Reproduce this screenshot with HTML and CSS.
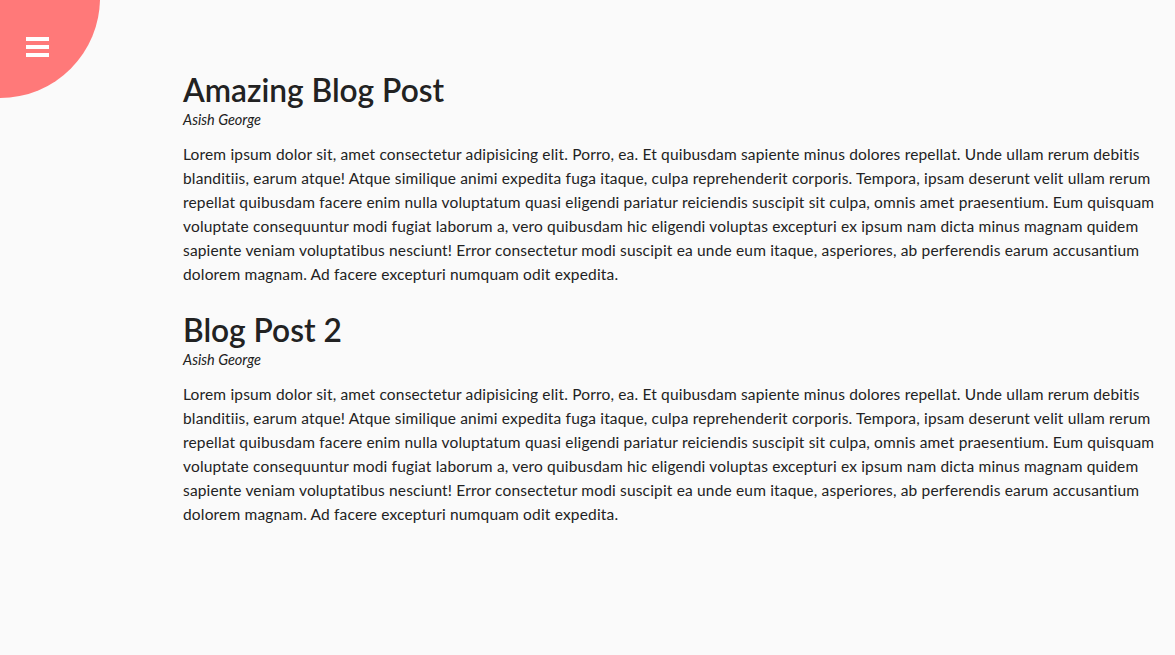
FILE: index.html
```html
<!DOCTYPE html>
<html lang="en">
<head>
<meta charset="utf-8">
<title>Blog</title>
<link rel="stylesheet" href="styles.css">
</head>
<body>
<button class="menu-btn" aria-label="Menu">
  <svg width="23" height="20" viewBox="0 0 23 20" fill="#ffffff"><rect x="0" y="0" width="23" height="4"/><rect x="0" y="8" width="23" height="4"/><rect x="0" y="16" width="23" height="4"/></svg>
</button>
<main class="content">
  <article class="post">
    <h1 class="post-title">Amazing Blog Post</h1>
    <p class="post-author">Asish George</p>
    <p class="post-body">Lorem ipsum dolor sit, amet consectetur adipisicing elit. Porro, ea. Et quibusdam sapiente minus dolores repellat. Unde ullam rerum debitis blanditiis, earum atque! Atque similique animi expedita fuga itaque, culpa reprehenderit corporis. Tempora, ipsam deserunt velit ullam rerum repellat quibusdam facere enim nulla voluptatum quasi eligendi pariatur reiciendis suscipit sit culpa, omnis amet praesentium. Eum quisquam voluptate consequuntur modi fugiat laborum a, vero quibusdam hic eligendi voluptas excepturi ex ipsum nam dicta minus magnam quidem sapiente veniam voluptatibus nesciunt! Error consectetur modi suscipit ea unde eum itaque, asperiores, ab perferendis earum accusantium dolorem magnam. Ad facere excepturi numquam odit expedita.</p>
  </article>
  <article class="post">
    <h1 class="post-title">Blog Post 2</h1>
    <p class="post-author">Asish George</p>
    <p class="post-body">Lorem ipsum dolor sit, amet consectetur adipisicing elit. Porro, ea. Et quibusdam sapiente minus dolores repellat. Unde ullam rerum debitis blanditiis, earum atque! Atque similique animi expedita fuga itaque, culpa reprehenderit corporis. Tempora, ipsam deserunt velit ullam rerum repellat quibusdam facere enim nulla voluptatum quasi eligendi pariatur reiciendis suscipit sit culpa, omnis amet praesentium. Eum quisquam voluptate consequuntur modi fugiat laborum a, vero quibusdam hic eligendi voluptas excepturi ex ipsum nam dicta minus magnam quidem sapiente veniam voluptatibus nesciunt! Error consectetur modi suscipit ea unde eum itaque, asperiores, ab perferendis earum accusantium dolorem magnam. Ad facere excepturi numquam odit expedita.</p>
  </article>
</main>
</body>
</html>
```
FILE: styles.css
```css
* { box-sizing: border-box; }
html, body { margin: 0; padding: 0; }
body {
  background: #fafafa;
  color: #222222;
  font-family: Lato, "Open Sans", sans-serif;
}
.menu-btn {
  position: absolute;
  top: -102px;
  left: -100px;
  width: 200px;
  height: 200px;
  border-radius: 50%;
  background: #ff7979;
  border: none;
  padding: 0;
  cursor: pointer;
}
.menu-btn svg {
  position: absolute;
  left: 126px;
  top: 139px;
}
.content {
  padding: 68px 10px 40px 183px;
}
.post { margin-bottom: 22px; }
.post-title {
  margin: 0;
  font-size: 31.7px;
  font-weight: 600;
  line-height: 44px;
}
.post-author {
  margin: 0 0 14px;
  font-size: 14.5px;
  font-style: italic;
  line-height: 16px;
}
.post-body {
  margin: 0;
  font-size: 15.5px;
  letter-spacing: 0.17px;
  line-height: 24px;
}
```
